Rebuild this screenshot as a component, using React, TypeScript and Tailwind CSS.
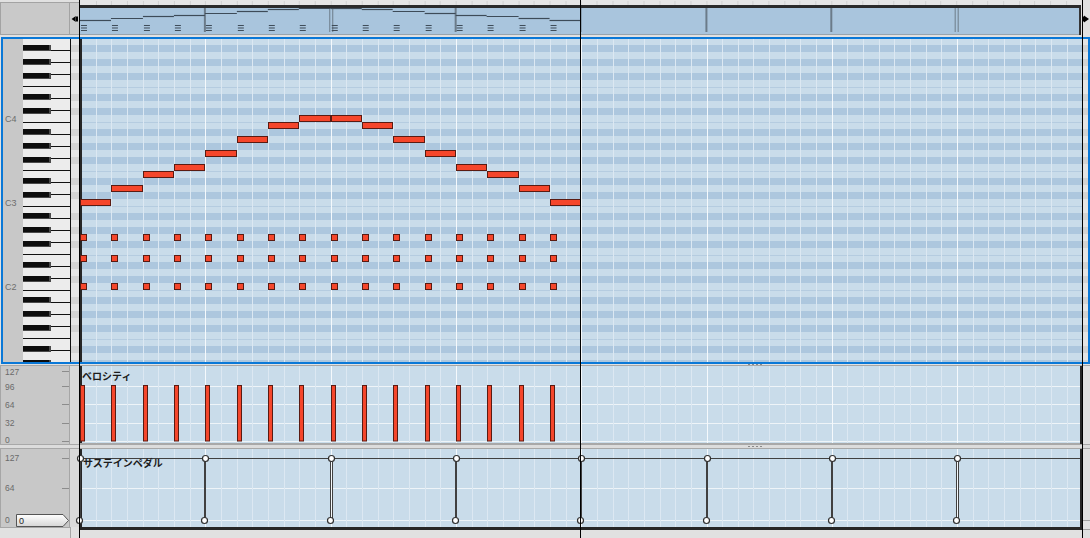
import React from "react";

// time grid: one bar = 125.3px, starting at x=80
const BAR = 125.3;
const BEAT = BAR / 4;
const STEP = BAR / 8;
const X0 = 80;

const MELODY = [0, 2, 4, 5, 7, 9, 11, 12, 12, 11, 9, 7, 5, 4, 2, 0];
const CHORD_TOPS = [234, 255, 283];
const BLACK_KEYS = [1, 3, 6, 8, 10];
const RED = "#f5462b";
const RED_EDGE = "#5a1b12";
const LIGHT_ROW = "#c9dcea";
const DARK_ROW = "#adc7de";

const beatX = (i: number) => Math.round(X0 + i * BEAT);
const barX = (k: number) => Math.round(X0 + k * BAR);
const steps = Array.from({ length: 63 }, (_, k) => k + 1);

// C4 row top is y=115, 7px per semitone
const rows = Array.from({ length: 48 }, (_, i) => {
  const p = 72 - i;
  return { p, top: 115 - (p - 60) * 7, black: BLACK_KEYS.includes(p % 12) };
});

const GridLines = ({ y1, y2 }: { y1: number; y2: number }) => (
  <g>
    {steps.map((k) => {
      const x = Math.round(X0 + k * STEP) + 0.5;
      return (
        <line
          key={k}
          x1={x}
          x2={x}
          y1={y1}
          y2={y2}
          stroke={k % 8 === 0 ? "#f5f9fc" : "#dce8f2"}
        />
      );
    })}
  </g>
);

const Grip = () => (
  <div className="flex gap-[2px]">
    {[0, 1, 2, 3].map((i) => (
      <div key={i} className="w-[2px] h-px bg-[#8a8a8a]" />
    ))}
  </div>
);

const OverviewStrip = () => (
  <svg width={1002} height={37} viewBox="80 0 1002 37" className="block">
    <rect x={80} y={0} width={1002} height={5} fill="#e6e6e6" />
    {steps.map((k) => {
      const x = Math.round(X0 + k * STEP) + 0.5;
      return <line key={k} x1={x} x2={x} y1={1} y2={5} stroke="#d2d2d2" />;
    })}
    <rect x={80} y={5} width={1002} height={3} fill="#2b2b2b" />
    <rect x={80} y={8} width={1000} height={26} fill="#a9c5dd" />
    <rect x={80} y={34} width={1002} height={1} fill="#97a3ad" />
    <rect x={1080} y={5} width={2} height={30} fill="#2b2b2b" />

    {/* bar lines */}
    {[1, 3, 5, 6].map((k) => (
      <line key={k} x1={barX(k)} x2={barX(k)} y1={8} y2={32} stroke="#6b7b89" strokeWidth={2} />
    ))}
    {[2, 7].map((k) => (
      <g key={k} stroke="#6b7b89">
        <line x1={barX(k) - 1} x2={barX(k) - 1} y1={8} y2={32} />
        <line x1={barX(k) + 2} x2={barX(k) + 2} y1={8} y2={32} />
      </g>
    ))}
    <line x1={581.5} x2={581.5} y1={8} y2={32} stroke="#6b7b89" />

    {/* mini notes */}
    {MELODY.map((o, i) => (
      <line
        key={i}
        x1={beatX(i)}
        x2={beatX(i + 1)}
        y1={20.5 - o}
        y2={20.5 - o}
        stroke="#3d4b58"
        strokeWidth={1.2}
      />
    ))}
    {MELODY.map((_, i) => (
      <g key={i} stroke="#3d4b58">
        <line x1={beatX(i) + 1} x2={beatX(i) + 7} y1={25.5} y2={25.5} />
        <line x1={beatX(i) + 1} x2={beatX(i) + 7} y1={28} y2={28} />
        <line x1={beatX(i) + 1} x2={beatX(i) + 7} y1={30.5} y2={30.5} />
      </g>
    ))}
  </svg>
);

const Overview = () => (
  <div className="flex h-[37px]">
    <div className="w-[70px] h-[33px] mt-[2px] bg-[#c9c9c9] border border-[#a3a3a3]" />
    <div className="w-[10px] h-[33px] mt-[2px] bg-[#cbcbcb] border-y border-r border-[#a3a3a3] flex items-center">
      <svg width={8} height={8} viewBox="0 0 8 8" className="ml-px">
        <polygon points="0,4 5,0.5 5,7.5" fill="#000" stroke="#fff" strokeWidth={0.5} />
        <rect x={5} y={1.5} width={2} height={5} fill="#000" />
      </svg>
    </div>
    <OverviewStrip />
    <div className="flex-1 flex items-center">
      <svg width={8} height={8} viewBox="0 0 8 8" className="ml-px">
        <rect x={0} y={1.5} width={2} height={5} fill="#000" />
        <polygon points="2,0.5 7,4 2,7.5" fill="#000" />
      </svg>
    </div>
  </div>
);

const Keyboard = () => {
  const whiteLines = Array.from({ length: 28 }, (_, k) => 38 + k * 12);
  return (
    <svg width={77} height={323} viewBox="3 39 77 323" className="block shrink-0">
      <rect x={3} y={39} width={20} height={323} fill="#c8c8c8" />
      {[
        ["C4", 122],
        ["C3", 206],
        ["C2", 290],
      ].map(([t, y]) => (
        <text key={t} x={5} y={y} fontSize={9} fill="#6d6d6d">
          {t}
        </text>
      ))}
      <rect x={23} y={39} width={47} height={323} fill="#ececec" />
      {whiteLines.map((y) => (
        <line key={y} x1={23} x2={70} y1={y + 0.5} y2={y + 0.5} stroke="#111" />
      ))}
      {rows
        .filter((r) => r.black)
        .map((r) => (
          <g key={r.p}>
            <rect x={23} y={r.top} width={28} height={6} fill="#4a4a4a" />
            <rect x={23} y={r.top} width={26} height={5} fill="#0d0d0d" />
          </g>
        ))}
      <line x1={70.5} x2={70.5} y1={39} y2={362} stroke="#111" />
      {rows.map((r) => (
        <rect key={r.p} x={71} y={r.top} width={9} height={7} fill={r.black ? "#d4d4d4" : "#e6e6e6"} />
      ))}
    </svg>
  );
};

const NoteGrid = () => (
  <svg width={1008} height={323} viewBox="80 39 1008 323" className="block">
    {rows.map((r) => (
      <g key={r.p}>
        <rect x={80} y={r.top} width={1002} height={7} fill={r.black ? DARK_ROW : LIGHT_ROW} />
        <rect x={1083} y={r.top} width={5} height={7} fill={r.black ? "#d2d2d2" : "#e4e4e4"} />
      </g>
    ))}
    {rows
      .filter((r) => r.p % 12 === 4 || r.p % 12 === 11)
      .map((r) => (
        <line key={r.p} x1={80} x2={1082} y1={r.top + 0.5} y2={r.top + 0.5} stroke="#b5cce0" />
      ))}
    <GridLines y1={39} y2={362} />
    <rect x={80} y={39} width={2} height={323} fill="#262626" />

    {/* melody */}
    {MELODY.map((o, i) => (
      <rect
        key={i}
        x={beatX(i) + 0.5}
        y={199 - o * 7 + 0.5}
        width={beatX(i + 1) - beatX(i) - 1}
        height={6}
        fill={RED}
        stroke={RED_EDGE}
      />
    ))}
    {/* chords */}
    {MELODY.map((_, i) =>
      CHORD_TOPS.map((t) => (
        <rect
          key={`${i}-${t}`}
          x={beatX(i) + 0.5}
          y={t + 0.5}
          width={6}
          height={6}
          fill={RED}
          stroke={RED_EDGE}
        />
      ))
    )}
  </svg>
);

const VelocityAxis = () => (
  <svg width={68} height={78} viewBox="1 366 68 78" className="block">
    {[
      ["127", 375, 371],
      ["96", 390, 386],
      ["64", 408, 404],
      ["32", 426, 423],
      ["0", 443, 441],
    ].map(([t, y, ty]) => (
      <g key={t as string}>
        <text x={5} y={y as number} fontSize={8.5} fill="#6a6a6a">
          {t}
        </text>
        <line x1={62} x2={69} y1={(ty as number) + 0.5} y2={(ty as number) + 0.5} stroke="#8c8c8c" />
      </g>
    ))}
  </svg>
);

const VelocityChart = () => (
  <svg width={1002} height={78} viewBox="80 366 1002 78" className="block">
    <rect x={80} y={366} width={1002} height={78} fill={LIGHT_ROW} />
    {[386, 404, 423, 441].map((y) => (
      <line key={y} x1={80} x2={1080} y1={y + 0.5} y2={y + 0.5} stroke="#eef4f8" />
    ))}
    <GridLines y1={366} y2={443} />
    <rect x={80} y={366} width={2} height={78} fill="#262626" />
    <rect x={1080} y={366} width={2} height={78} fill="#262626" />
    <line x1={80} x2={1080} y1={443.5} y2={443.5} stroke="#a8a8a8" />
    {MELODY.map((_, i) => (
      <rect
        key={i}
        x={beatX(i) + 0.5}
        y={385.5}
        width={4}
        height={55.5}
        fill={RED}
        stroke={RED_EDGE}
      />
    ))}
  </svg>
);

const SustainAxis = () => (
  <svg width={68} height={78} viewBox="1 449 68 78" className="block">
    {[
      ["127", 461, 458],
      ["64", 491, 488],
    ].map(([t, y, ty]) => (
      <g key={t as string}>
        <text x={5} y={y as number} fontSize={8.5} fill="#6a6a6a">
          {t}
        </text>
        <line x1={62} x2={69} y1={(ty as number) + 0.5} y2={(ty as number) + 0.5} stroke="#8c8c8c" />
      </g>
    ))}
    <text x={5} y={523} fontSize={8.5} fill="#6a6a6a">
      0
    </text>
    <defs>
      <linearGradient id="box" x1="0" y1="0" x2="0" y2="1">
        <stop offset="0" stopColor="#ffffff" />
        <stop offset="1" stopColor="#d6d6d6" />
      </linearGradient>
    </defs>
    <polygon points="16.5,514.5 63,514.5 68.5,520.5 63,526.5 16.5,526.5" fill="url(#box)" stroke="#555" />
    <text x={19} y={524} fontSize={9} fill="#222">
      0
    </text>
  </svg>
);

const SustainChart = () => {
  const bars = [0, 1, 3, 4, 5, 6];
  return (
    <svg width={1002} height={78} viewBox="80 449 1002 78" className="block overflow-visible">
      <rect x={80} y={449} width={1002} height={78} fill={LIGHT_ROW} />
      {[488, 520].map((y) => (
        <line key={y} x1={80} x2={1080} y1={y + 0.5} y2={y + 0.5} stroke="#eef4f8" />
      ))}
      <GridLines y1={449} y2={527} />
      <rect x={80} y={449} width={2} height={78} fill="#262626" />
      <rect x={1080} y={449} width={2} height={78} fill="#262626" />

      {/* pedal curve */}
      <line x1={80} x2={1080} y1={458.5} y2={458.5} stroke="#404040" />
      {bars.map((k) => (
        <line key={k} x1={barX(k)} x2={barX(k)} y1={458} y2={520} stroke="#404040" strokeWidth={2} />
      ))}
      {[2, 7].map((k) => (
        <g key={k} stroke="#404040">
          <line x1={barX(k) - 0.5} x2={barX(k) - 0.5} y1={458} y2={520} />
          <line x1={barX(k) + 1.5} x2={barX(k) + 1.5} y1={458} y2={520} />
        </g>
      ))}
      {[0, 1, 2, 3, 4, 5, 6, 7].map((k) => (
        <g key={k} fill="#fff" stroke="#303030" strokeWidth={1.2}>
          <circle cx={barX(k) + 0.5} cy={458.5} r={3} />
          <circle cx={barX(k) - 0.5} cy={520.5} r={3} />
        </g>
      ))}
    </svg>
  );
};

const laneTitle =
  "absolute left-[2px] text-[10px] leading-none font-bold text-[#1c1c1c] font-['Noto_Sans_CJK_JP',sans-serif]";

export default function App() {
  return (
    <div className="relative w-[1090px] h-[538px] overflow-hidden bg-[#e1e1e1] font-['Liberation_Sans',sans-serif]">
      <div className="flex flex-col">
        <Overview />

        {/* piano roll */}
        <div className="flex ml-px w-[1089px] h-[327px] border-2 border-[#0a78d7]">
          <Keyboard />
          <NoteGrid />
        </div>

        {/* velocity lane */}
        <div className="h-[2px] border-b border-[#a6a6a6] flex items-start pl-[748px]">
          <Grip />
        </div>
        <div className="flex h-[78px]">
          <div className="w-[70px] h-[79px] bg-[#c8c8c8] border border-t-0 border-[#a6a6a6]">
            <VelocityAxis />
          </div>
          <div className="w-[10px] bg-[#dadada]" />
          <div className="relative">
            <VelocityChart />
            <span className={`${laneTitle} top-[5px]`}>ベロシティ</span>
          </div>
        </div>
        <div className="h-[5px] bg-[#dcdcdc] border-y border-[#a8a8a8] flex items-center pl-[748px]">
          <Grip />
        </div>

        {/* sustain lane */}
        <div className="flex h-[78px]">
          <div className="w-[70px] h-[79px] bg-[#c8c8c8] border border-t-0 border-[#a6a6a6]">
            <SustainAxis />
          </div>
          <div className="w-[10px] bg-[#dadada]" />
          <div className="relative">
            <SustainChart />
            <span className={`${laneTitle} left-[3px] top-[9px]`}>サステインペダル</span>
          </div>
          <div className="flex-1 flex flex-col justify-end pb-[6px]">
            <div className="h-px bg-[#a0a0a0]" />
          </div>
        </div>
        <div className="flex h-[11px]">
          <div className="w-[71px] border-r border-[#a6a6a6]" />
          <div className="w-[9px]" />
          <div className="w-[1002px] h-[3px] bg-[#262626]" />
          <div className="flex-1 pt-[2px]">
            <div className="h-px bg-[#a0a0a0]" />
          </div>
        </div>
      </div>

      {/* locator / cursor lines */}
      <div className="absolute left-[79px] top-0 h-full w-px bg-black" />
      <div className="absolute left-[580px] top-0 h-full w-px bg-black" />
      <div className="absolute left-[1082px] top-0 h-full w-px bg-black" />
    </div>
  );
}
